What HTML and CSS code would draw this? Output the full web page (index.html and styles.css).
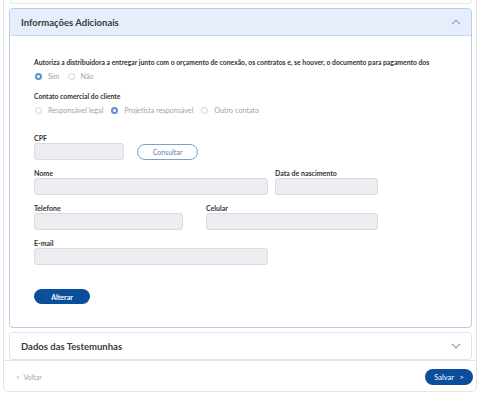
FILE: index.html
```html
<!DOCTYPE html>
<html lang="pt-BR">
<head>
    <meta charset="UTF-8">
    <meta name="viewport" content="width=device-width, initial-scale=1.0">
    <title>Informações Adicionais</title>
    <link rel="stylesheet" href="styles.css">
</head>
<body>
    <div class="page">
        <div class="panel-prev"></div>

        <div class="panel open">
            <div class="panel-header">
                <h2>Informações Adicionais</h2>
                <svg class="chevron up" width="10" height="6" viewBox="0 0 10 6"><path d="M1 5.2 L5 1.2 L9 5.2" fill="none" stroke="#7f9ccb" stroke-width="1.1"/></svg>
            </div>
            <div class="panel-body">
                <p class="question">Autoriza a distribuidora a entregar junto com o orçamento de conexão, os contratos e, se houver, o documento para pagamento dos</p>
                <div class="radios">
                    <span class="radio checked"></span><span class="radio-label">Sim</span>
                    <span class="radio"></span><span class="radio-label">Não</span>
                </div>

                <p class="question second">Contato comercial do cliente</p>
                <div class="radios">
                    <span class="radio"></span><span class="radio-label">Responsável legal</span>
                    <span class="radio checked"></span><span class="radio-label">Projetista responsável</span>
                    <span class="radio"></span><span class="radio-label">Outro contato</span>
                </div>

                <div class="form">
                    <div class="row cpf-row">
                        <div class="field">
                            <label>CPF</label>
                            <div class="input w-cpf"></div>
                        </div>
                        <button class="btn-outline">Consultar</button>
                    </div>
                    <div class="row gap-small">
                        <div class="field">
                            <label>Nome</label>
                            <div class="input w-nome"></div>
                        </div>
                        <div class="field">
                            <label>Data de nascimento</label>
                            <div class="input w-data"></div>
                        </div>
                    </div>
                    <div class="row gap-large">
                        <div class="field">
                            <label>Telefone</label>
                            <div class="input w-tel"></div>
                        </div>
                        <div class="field">
                            <label>Celular</label>
                            <div class="input w-cel"></div>
                        </div>
                    </div>
                    <div class="row">
                        <div class="field">
                            <label>E-mail</label>
                            <div class="input w-nome"></div>
                        </div>
                    </div>
                </div>

                <button class="btn-primary alterar">Alterar</button>
            </div>
        </div>

        <div class="panel closed">
            <div class="panel-header">
                <h2>Dados das Testemunhas</h2>
                <svg class="chevron" width="10" height="6" viewBox="0 0 10 6"><path d="M1 0.8 L5 4.8 L9 0.8" fill="none" stroke="#8a8a8a" stroke-width="1.1"/></svg>
            </div>
        </div>

        <div class="footer">
            <a href="#" class="back">&lt;&nbsp;&nbsp;Voltar</a>
            <button class="btn-primary salvar">Salvar&nbsp;&nbsp;&nbsp;&gt;</button>
        </div>
    </div>
</body>
</html>
```

FILE: styles.css
```css
body {
    margin: 0;
    background-color: #ffffff;
    font-family: Lato, "Open Sans", Arial, sans-serif;
    color: #333;
}
.page {
    margin: 0 3px;
    height: 392px;
    box-sizing: border-box;
    border: 1px solid #e4e4e4;
    border-top: none;
    border-radius: 0 0 5px 5px;
}
.panel-prev {
    height: 3px;
    margin: 0 4px 0 6px;
    border: 1px solid #e6e6e6;
    border-top: none;
    border-radius: 0 0 4px 4px;
}
.panel {
    margin: 4px 4px 0 5px;
    border: 1px solid #e3e3e3;
    border-radius: 4px;
    background-color: #fff;
}
.panel.open {
    border-color: #b7cdee;
    height: 320px;
    box-sizing: border-box;
}
.panel.closed {
    height: 28px;
    box-sizing: border-box;
}
.panel-header {
    display: flex;
    align-items: center;
    justify-content: space-between;
    height: 26px;
    padding: 0 10px 0 11px;
}
.open .panel-header {
    background-color: #e6eefc;
    border-bottom: 1px solid #c9d9f2;
    border-radius: 3px 3px 0 0;
}
.panel-header h2 {
    margin: 0;
    font-size: 9.5px;
    font-weight: bold;
    color: #3a3a3a;
}
.panel-body {
    padding: 21px 24px 0 24px;
}
.question {
    margin: 0;
    font-size: 6.8px;
    line-height: 10px;
    font-weight: bold;
    color: #333;
    white-space: nowrap;
}
.question.second {
    margin-top: 10px;
}
.radios {
    display: flex;
    align-items: center;
    margin-top: 4px;
    height: 10px;
}
.radio {
    width: 5px;
    height: 5px;
    border: 1px solid #cfd3d8;
    border-radius: 50%;
    margin-left: 1px;
    margin-right: 6px;
    box-sizing: content-box;
}
.radio.checked {
    border: 2px solid #5b8fd6;
    width: 3px;
    height: 3px;
    background-color: #fff;
}
.radio-label {
    font-size: 7.2px;
    color: #a3a3a3;
    margin-right: 7px;
}
.form {
    margin-top: 18px;
}
.row {
    display: flex;
    align-items: flex-end;
    margin-top: 8px;
}
.row:first-child {
    margin-top: 0;
}
.gap-small {
    gap: 7px;
}
.gap-large {
    gap: 23px;
}
.cpf-row {
    gap: 13px;
}
.field label {
    display: block;
    font-size: 7px;
    line-height: 10px;
    font-weight: bold;
    color: #333;
}
.input {
    height: 17px;
    box-sizing: border-box;
    background-color: #ebedf0;
    border: 1px solid #d8dce1;
    border-radius: 3px;
}
.w-cpf { width: 90px; }
.w-nome { width: 234px; }
.w-data { width: 103px; }
.w-tel { width: 149px; }
.w-cel { width: 172px; }
.btn-outline {
    width: 61px;
    height: 16px;
    padding: 0;
    border: 1px solid #7e9fcb;
    border-radius: 8px;
    background-color: #fff;
    color: #5d80b3;
    font-family: inherit;
    font-size: 7px;
}
.btn-primary {
    height: 16px;
    padding: 0;
    border: none;
    border-radius: 8px;
    background-color: #0b4f9c;
    color: #fff;
    font-family: inherit;
    font-size: 7px;
    font-weight: bold;
}
.alterar {
    display: block;
    width: 56px;
    height: 15px;
    margin-top: 24px;
}
.footer {
    display: flex;
    align-items: center;
    justify-content: space-between;
    border-top: 1px solid #e4e4e4;
    height: 32px;
    padding: 0 3px 0 12px;
}
.back {
    color: #a5a5a5;
    font-size: 7px;
    text-decoration: none;
}
.salvar {
    width: 48px;
    font-weight: normal;
    font-size: 7.5px;
}
```
